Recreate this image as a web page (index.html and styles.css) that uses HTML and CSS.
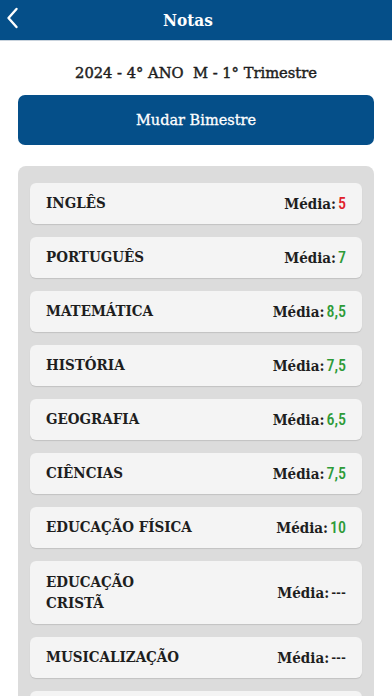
FILE: index.html
```html
<!DOCTYPE html>
<html lang="pt">
<head>
<meta charset="utf-8">
<link rel="stylesheet" href="styles.css">
</head>
<body>
<header class="topbar">
  <svg class="back" width="14" height="22" viewBox="0 0 14 22"><path d="M11.5 2 L3.5 11 L11.5 20" fill="none" stroke="#fff" stroke-width="2.4" stroke-linecap="round" stroke-linejoin="round"/></svg>
  <h1 class="title">Notas</h1>
</header>
<main class="content">
  <p class="period">2024 - 4° ANO&nbsp; M - 1° Trimestre</p>
  <button class="change">Mudar Bimestre</button>
  <section class="panel">
    <div class="card"><span class="subj">INGLÊS</span><span class="avg">Média:<b class="red">5</b></span></div>
    <div class="card"><span class="subj">PORTUGUÊS</span><span class="avg">Média:<b class="green">7</b></span></div>
    <div class="card"><span class="subj">MATEMÁTICA</span><span class="avg">Média:<b class="green">8,5</b></span></div>
    <div class="card"><span class="subj">HISTÓRIA</span><span class="avg">Média:<b class="green">7,5</b></span></div>
    <div class="card"><span class="subj">GEOGRAFIA</span><span class="avg">Média:<b class="green">6,5</b></span></div>
    <div class="card"><span class="subj">CIÊNCIAS</span><span class="avg">Média:<b class="green">7,5</b></span></div>
    <div class="card"><span class="subj">EDUCAÇÃO FÍSICA</span><span class="avg">Média:<b class="green">10</b></span></div>
    <div class="card tall"><span class="subj">EDUCAÇÃO<br>CRISTÃ</span><span class="avg">Média:<b class="none">---</b></span></div>
    <div class="card"><span class="subj">MUSICALIZAÇÃO</span><span class="avg">Média:<b class="none">---</b></span></div>
    <div class="card"></div>
  </section>
</main>
</body>
</html>
```
FILE: styles.css
```css
* { box-sizing: border-box; }
html, body { margin: 0; padding: 0; background: #fff; }
body { font-family: "DejaVu Serif", serif; color: #1e1e1e; overflow: hidden; height: 696px; }
.topbar {
  height: 41px;
  background: #054f89;
  border-bottom: 1px solid #c9d3dd;
  display: flex;
  align-items: center;
  justify-content: center;
  position: relative;
  padding-right: 16px;
}
.back { position: absolute; left: 5px; top: 7px; }
.title { margin: 0; color: #fff; font-size: 17px; font-weight: bold; font-stretch: condensed; }
.content { padding: 0 18px; }
.period {
  margin: 22px 0 0; text-align: center; font-size: 14.7px; font-weight: normal;
  line-height: 20px; color: #1e1e1e; -webkit-text-stroke: 0.45px #1e1e1e;
}
.change {
  display: block; width: 100%; height: 50px; margin-top: 12px;
  background: #054f89; color: #fff; border: none; border-radius: 7px;
  font-family: inherit; font-size: 14.5px; font-weight: normal;
  -webkit-text-stroke: 0.3px #fff;
}
.panel {
  margin-top: 21px;
  background: #dcdcdc;
  border-radius: 8px;
  padding: 17px 12px;
  display: flex; flex-direction: column; gap: 13px;
}
.card {
  background: #f4f4f4;
  border-radius: 6px;
  box-shadow: 0 1px 1px rgba(0,0,0,0.12);
  height: 41px;
  flex: none;
  padding: 0 16px;
  display: flex; align-items: center; justify-content: space-between;
  font-size: 15px; font-weight: bold; font-stretch: condensed;
}
.card.tall { height: 63px; }
.subj { line-height: 21px; }
.avg b { font-family: Roboto, sans-serif; font-weight: 500; font-size: 16px; margin-left: 2px; }
.red { color: #e0202a; }
.green { color: #2e9b38; }
.none { color: #1e1e1e; }
```
